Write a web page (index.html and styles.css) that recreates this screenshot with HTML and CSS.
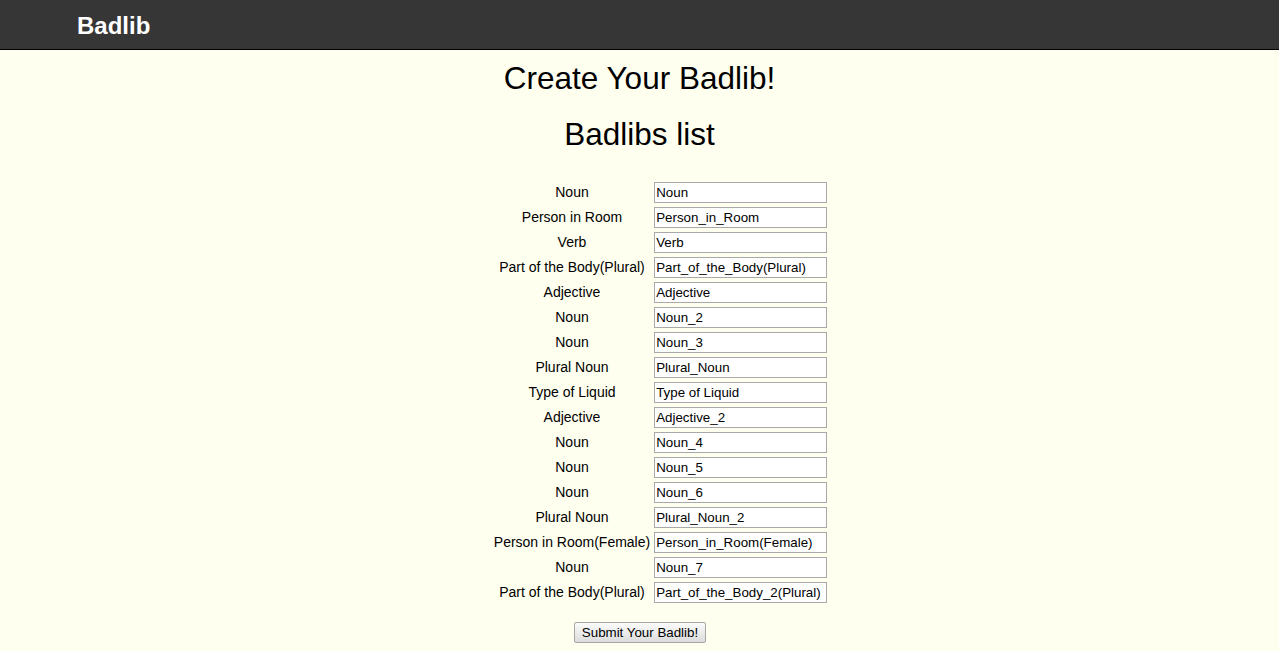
FILE: index.html
```html
<!DOCTYPE html>
<html lang="en">
<head>
<meta charset="utf-8">
<title>Badlib</title>
<link rel="stylesheet" href="styles.css">
</head>
<body>
<header class="navbar">
  <a class="brand" href="#">Badlib</a>
</header>
<main class="content">
  <h1 class="title">Create Your Badlib!</h1>
  <h2 class="subtitle">Badlibs list</h2>
  <form class="badlib-form">
    <div class="table-wrap">
      <table class="fields">
        <tr><td class="label">Noun</td><td><input class="field" type="text" value="Noun"></td></tr>
        <tr><td class="label">Person in Room</td><td><input class="field" type="text" value="Person_in_Room"></td></tr>
        <tr><td class="label">Verb</td><td><input class="field" type="text" value="Verb"></td></tr>
        <tr><td class="label">Part of the Body(Plural)</td><td><input class="field" type="text" value="Part_of_the_Body(Plural)"></td></tr>
        <tr><td class="label">Adjective</td><td><input class="field" type="text" value="Adjective"></td></tr>
        <tr><td class="label">Noun</td><td><input class="field" type="text" value="Noun_2"></td></tr>
        <tr><td class="label">Noun</td><td><input class="field" type="text" value="Noun_3"></td></tr>
        <tr><td class="label">Plural Noun</td><td><input class="field" type="text" value="Plural_Noun"></td></tr>
        <tr><td class="label">Type of Liquid</td><td><input class="field" type="text" value="Type of Liquid"></td></tr>
        <tr><td class="label">Adjective</td><td><input class="field" type="text" value="Adjective_2"></td></tr>
        <tr><td class="label">Noun</td><td><input class="field" type="text" value="Noun_4"></td></tr>
        <tr><td class="label">Noun</td><td><input class="field" type="text" value="Noun_5"></td></tr>
        <tr><td class="label">Noun</td><td><input class="field" type="text" value="Noun_6"></td></tr>
        <tr><td class="label">Plural Noun</td><td><input class="field" type="text" value="Plural_Noun_2"></td></tr>
        <tr><td class="label">Person in Room(Female)</td><td><input class="field" type="text" value="Person_in_Room(Female)"></td></tr>
        <tr><td class="label">Noun</td><td><input class="field" type="text" value="Noun_7"></td></tr>
        <tr><td class="label">Part of the Body(Plural)</td><td><input class="field" type="text" value="Part_of_the_Body_2(Plural)"></td></tr>
      </table>
    </div>
    <div class="actions">
      <button class="submit" type="button">Submit Your Badlib!</button>
    </div>
  </form>
</main>
</body>
</html>
```

FILE: styles.css
```css
html, body {
  margin: 0;
  padding: 0;
}

body {
  background: #fffff0;
  font-family: "Liberation Sans", Arial, sans-serif;
  color: #000;
  min-height: 651px;
}

.navbar {
  height: 49px;
  background: #363636;
  border-bottom: 1px solid #000;
  display: flex;
  align-items: center;
  padding-left: 77px;
}

.brand {
  color: #fff;
  font-weight: bold;
  font-size: 24px;
  line-height: 28px;
  text-decoration: none;
  padding-top: 2px;
}

.content {
  text-align: center;
}

.title {
  margin: 10px 0 0;
  font-size: 31.5px;
  font-weight: normal;
  line-height: 37px;
}

.subtitle {
  margin: 19px 0 0;
  font-size: 31.5px;
  font-weight: normal;
  line-height: 37px;
}

.badlib-form {
  margin-top: 26px;
}

.table-wrap {
  display: flex;
  justify-content: center;
  padding-left: 42px;
}

.fields {
  border-collapse: separate;
  border-spacing: 2px;
  font-size: 14px;
}

.fields td {
  padding: 1px;
  vertical-align: middle;
}

.fields td.label {
  text-align: center;
  padding: 0 1px 2px;
}

.field {
  display: block;
  box-sizing: border-box;
  width: 173px;
  height: 21px;
  margin: 0;
  padding: 1px 2px 1px 1px;
  border: 1px solid #a9a9a9;
  background: #fff;
  font-family: "Liberation Sans", Arial, sans-serif;
  font-size: 13.333px;
  color: #000;
}

.actions {
  margin-top: 16px;
  display: flex;
  justify-content: center;
  padding-left: 1px;
}

.submit {
  box-sizing: border-box;
  height: 21px;
  padding: 0 6.5px;
  margin: 0;
  border: 1px solid #a6a6a6;
  border-radius: 2px;
  background: linear-gradient(#fbfbfb, #dcdcdc);
  font-family: "Liberation Sans", Arial, sans-serif;
  font-size: 13.333px;
  color: #000;
}
```
